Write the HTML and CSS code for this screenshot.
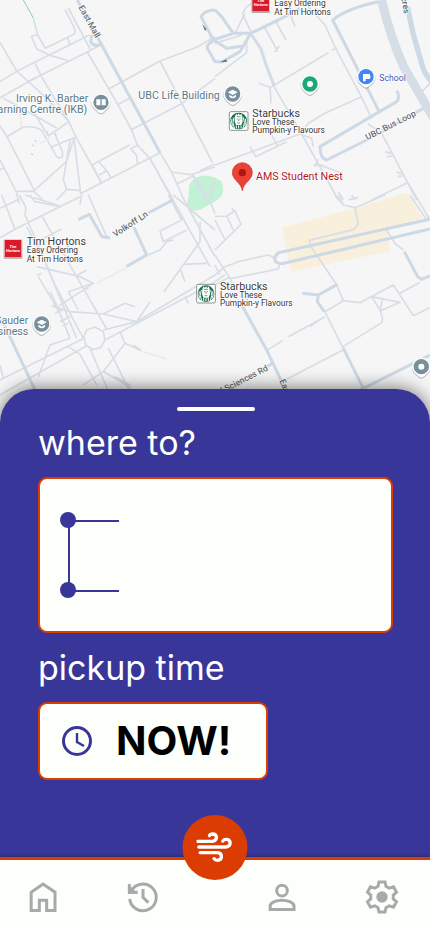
FILE: index.html
```html
<!DOCTYPE html>
<html lang="en">
<head>
<meta charset="utf-8">
<meta name="viewport" content="width=device-width, initial-scale=1">
<title>Where to?</title>
<link rel="stylesheet" href="styles.css">
</head>
<body>
<div class="screen">
  <section class="map" aria-label="Campus map">
    <svg class="map-art" viewBox="0 0 1290 1260" preserveAspectRatio="xMidYMin slice">
      <defs>
        <path id="pin" d="M-28 0A28 28 0 1 1 28 0C28 14 18 20 10 28Q0 38 -10 28C-18 20 -28 14 -28 0Z"/>
        <g id="siren">
          <rect x="-28" y="-28" width="56" height="56" rx="4" fill="#fff" stroke="#8d9299" stroke-width="3"/>
          <circle r="25" fill="#17704c"/>
          <path d="M-11 -14L-7 -22L-3 -17L0 -23L4 -17L8 -22L11 -14L12 2L8 12H-8L-12 2Z" fill="#fff"/>
          <path d="M-14 -11Q-21 5 -13 21M14 -11Q21 5 13 21M-20 -7Q-24 5 -18 14M20 -7Q24 5 18 14M-7 13V22M0 13V23M7 13V22" fill="none" stroke="#fff" stroke-width="3"/>
          <path d="M-6 -6H-2M2 -6H6M0 -5V1M-4 5Q0 8 4 5M-6 -13H6" fill="none" stroke="#17704c" stroke-width="2"/>
        </g>
        <g id="timmy">
          <rect x="-28" y="-28" width="56" height="58" rx="3" fill="#a9abb0"/>
          <rect x="-27" y="-28" width="54" height="54" rx="3" fill="#f4d9db"/>
          <rect x="-25" y="-26" width="50" height="51" fill="#da1a2b"/>
          <text class="tim" y="-3">Tim</text><text class="tim" y="10">Hortons</text>
        </g>
        <g id="cap">
          <path d="M-15 -5L0 -13L15 -5L0 3Z" fill="#fff"/>
          <path d="M-10 2V8Q0 17 10 8V2L0 8Z" fill="#fff"/>
        </g>
      </defs>

      <path class="park" d="M566 560Q574 534 606 527Q640 525 665 545Q675 570 664 588Q650 605 620 618Q600 635 575 629Q558 620 562 605Q568 590 566 560Z"/>
      <path class="sand" d="M846 683L1075 622L1195 585L1222 578L1268 655L1165 687L1170 753L874 816Z"/>

      <g class="lane">
        <path d="M100 55L113 105L136 145L222 103Q228 96 222 82L195 28M94 108L110 147L150 166L208 183M94 108L113 105M202 112L210 133M205 24L270 147"/>
        <path d="M0 127L50 213L124 280L205 362M0 245L50 214L270 104M0 293L110 232L262 156L300 136M105 190L130 240L205 362L228 411L305 550"/>
        <path d="M262 156L352 311L395 390L412 435L450 475L520 600M327 266L480 183L590 142L645 110M480 183L637 487M352 314L390 294M392 390L545 311L645 235M82 246L110 232"/>
        <path d="M10 295L84 335L170 384M100 335L145 408L205 366M21 410L68 382Q105 376 125 392L156 445L170 470Q180 478 188 468L187 455L165 402M145 408L140 392M156 440L228 411"/>
        <path class="faint" d="M65 382L60 340M120 430L150 415"/>
        <path d="M0 378L21 410L103 571L199 485L222 415L242 581M210 420L190 540L200 568L242 572M48 574H102L128 600M170 600L200 568M0 480L48 574L58 610M0 510L10 505"/>
        <path d="M240 582L480 458M276 495L305 550M276 495L390 434M297 485L320 512L297 525M320 512L333 534M415 435L392 446L410 467L412 490M450 475L560 675M480 458L515 516L552 600L645 770M515 516L572 524L645 500M530 552L580 528L620 600M645 492L600 512"/>
        <path d="M575 524Q612 558 645 640M645 545Q625 570 636 600"/>
      </g>
      <g class="lane" transform="translate(645 0)">
        <path d="M90 40L60 100M82 40L95 20L125 0M0 130L80 105M0 230L95 158V115M110 100L82 40M180 60L213 120M225 40L240 80M145 75L187 152L178 155M187 145L193 138M132 250L165 262L177 256L340 158M165 262L168 310M350 150L365 145"/>
        <path d="M280 20L330 75L362 145L440 292L470 355M440 290L330 340L280 370L255 402L0 495M105 440L122 470L215 425M170 405L187 437M175 256L260 402L370 600M255 402L290 415L295 440M458 370L500 400L605 600M510 455L530 460M515 470L532 468M545 515L560 522M548 530L562 528M300 490L370 515L385 535M310 478L300 500M325 495L295 497M370 575L385 600M470 600L575 550M615 280L645 250M400 600L430 592"/>
      </g>
      <g class="lane" transform="translate(0 585)">
        <path d="M0 40L58 12M5 0L45 103L0 128M45 103L125 62L240 5M58 0L78 38L75 60L110 140L135 200L165 270L250 430M90 0L105 20L182 35M75 0L180 33M125 62L320 402M80 95L140 210M110 140L185 102M110 215L240 245L280 265L205 290M260 225L225 245M265 0L320 125M245 0L240 30M112 240L125 235M115 245L180 355L210 430M135 200L230 430M150 290L180 350M155 332L210 350L310 357L410 380M205 290L235 345M280 265L178 332M310 357L375 325L405 335M240 290L265 280M165 355L187 345M180 380L210 365M187 392L205 385"/>
        <path d="M0 555L255 428M0 600L260 452M310 405L410 380L645 240M315 435L645 262M450 320L410 380M492 290L600 140V80M540 220L555 260M550 208L620 205M510 0L630 215M520 0L645 105M505 0L545 75L480 108L490 140L560 105M445 180L480 165L500 140L520 135M555 305L565 325M260 405L285 396L310 410L315 435L302 458L280 464L257 450L252 425Z"/>
        <path d="M210 430L150 450L115 545M200 452L240 478L290 570M270 460L330 600M250 570L310 530L375 445L360 410M312 530L395 580M325 460L400 610M375 445L425 468M345 545L390 570M0 510L10 550M400 450L425 467"/>
        <path class="faint" d="M290 265L380 218M430 470L500 492"/>
      </g>
      <g class="lane" transform="translate(645 585)">
        <path d="M0 65L35 63L60 48L78 88L0 165M0 75L30 135M35 63L55 105M50 40L60 50M0 180L45 250L62 290M0 210L15 240M0 240L30 215L70 200L160 180L178 188M30 240L0 260M45 250L60 248L190 222L195 205M0 270L45 245M360 0L385 30L420 38L510 0M370 0L385 30M410 0L420 15M420 38L430 88L415 104L283 136L285 150L365 270L385 317L435 323L535 270L595 362L645 338M515 105L540 145L565 165M385 317L330 350M285 395L330 365M330 350L384 460M220 425L330 365M158 465L203 436M384 455L500 383L503 370L495 345L470 305L555 322L495 348L503 310M555 295L615 262M210 555L384 465M585 0L635 75M580 -35L645 75"/>
      </g>

      <g class="road">
        <path d="M232 0L300 125L480 458M300 133Q280 142 272 125L275 108L290 105"/>
        <path d="M235 659L268 643L306 710L330 714M445 639L518 600M402 682L440 765L380 799M0 950L25 1000L105 1170"/>
        <path d="M645 30Q615 30 603 50L640 120L680 145L730 138L752 100M752 100H700L665 50L645 30M640 120L700 100M645 120Q620 130 622 145L645 185H668L720 155L752 100L845 55L900 25"/>
        <path d="M1135 5Q1040 25 998 60L1140 340M1190 272Q1202 290 1190 305L960 440Q960 475 980 480L1100 420L1270 325"/>
        <path d="M1290 658L835 758Q818 775 828 786Q840 793 855 789L1290 687M1213 755L1253 830L1265 838L1290 828"/>
        <path d="M907 880L955 885L1012 853M955 885L952 905L973 935M725 915L800 1050L862 1180M1030 1045L1090 1165M1080 1170L1160 1130L1290 1065M800 1100L822 1088"/>
      </g>
      <path class="road avenue" d="M752 100L782 145L800 200L822 256"/>
      <path class="highway" d="M1145 0Q1170 110 1211 200L1310 370"/>
      <path class="road wide" d="M1222 20L1239 100L1268 200Q1275 225 1300 250"/>
      <path d="M70 0L100 54M94 460L98 465M105 420L108 425M97 435L101 438M165 400L168 404" stroke="#86cfb4" stroke-width="3"/>
      <path d="M606 72L620 88L615 92ZM660 187L678 178L682 185Z" fill="#70757a"/>

      <g class="name place">
        <text x="48" y="306">Irving K. Barber</text>
        <text x="262" y="339" text-anchor="end">Learning Centre (IKB)</text>
        <text x="415" y="297">UBC Life Building</text>
        <text x="85" y="973" text-anchor="end">Sauder</text>
        <text x="85" y="1004" text-anchor="end">Business</text>
      </g>
      <g class="name shop">
        <text x="757" y="350">Starbucks</text>
        <text x="80" y="735">Tim Hortons</text>
        <text x="660" y="869">Starbucks</text>
      </g>
      <g class="name promo">
        <text x="823" y="18">Easy Ordering</text><text x="823" y="45">At Tim Hortons</text>
        <text x="757" y="376">Love These</text><text x="757" y="399">Pumpkin-y Flavours</text>
        <text x="80" y="760">Easy Ordering</text><text x="80" y="786">At Tim Hortons</text>
        <text x="660" y="895">Love These</text><text x="660" y="918">Pumpkin-y Flavours</text>
      </g>
      <text class="name nest" x="768" y="541">AMS Student Nest</text>
      <text class="name school" x="1138" y="243">School</text>
      <g class="name street">
        <text transform="translate(235 22) rotate(61)">East Mall</text>
        <text transform="translate(346 712) rotate(-33)">Volkoff Ln</text>
        <text transform="translate(1102 421) rotate(-27)">UBC Bus Loop</text>
        <text transform="translate(806 1110) rotate(-27)" text-anchor="end">Agricultural Sciences Rd</text>
        <text transform="translate(838 1142) rotate(66)">East Mall</text>
        <text class="west" transform="translate(1212 42) rotate(80)" text-anchor="end">Wesbrook Acres</text>
      </g>

      <g class="pins">
        <g transform="translate(303 307)"><use class="pin-base" href="#pin"/><circle r="23" fill="#78909c"/><path d="M-14 -9H-2V9H-14ZM2 -9H14V9H2Z" fill="#fff"/></g>
        <g transform="translate(698 282)"><use class="pin-base" href="#pin"/><circle r="23" fill="#78909c"/><use href="#cap"/></g>
        <g transform="translate(125 972)"><use class="pin-base" href="#pin"/><circle r="23" fill="#78909c"/><use href="#cap"/></g>
        <g transform="translate(1264 1100)"><use class="pin-base" href="#pin"/><circle r="23" fill="#78909c"/><circle r="9" fill="#fff"/></g>
        <g transform="translate(930 252)"><use class="pin-base" href="#pin"/><circle r="23" fill="#1da877"/><circle r="9" fill="#fff"/></g>
        <g transform="translate(1098 230)"><use class="pin-base" href="#pin"/><circle r="23" fill="#4285f4"/><path d="M-9 -8H11Q16 0 11 7H-1V14H-9Z" fill="#fff"/></g>
      </g>
      <path d="M727 572C724 548 697 540 697 518A30 30 0 1 1 757 518C757 540 730 548 727 572Z" fill="#ea4335" stroke="#c5372c" stroke-width="2"/>
      <circle cx="727" cy="518" r="11" fill="#b31412"/>
      <use href="#siren" x="716" y="363"/>
      <use href="#siren" x="618" y="881"/>
      <use href="#timmy" x="39" y="746"/>
      <use href="#timmy" x="782" y="9"/>
    </svg>
  </section>

  <main class="sheet">
    <span class="handle"></span>
    <h2 class="title">where to?</h2>
    <div class="card route">
      <svg class="route-line" viewBox="0 0 60 86" aria-hidden="true">
        <path d="M8 9H59M9 8V79H59" fill="none" stroke="#39369a" stroke-width="2"/>
        <circle cx="8" cy="8" r="8" fill="#39369a"/><circle cx="8" cy="78" r="8" fill="#39369a"/>
      </svg>
      <div class="stops">
        <input class="stop" type="text" aria-label="Pickup location">
        <input class="stop" type="text" aria-label="Destination">
      </div>
    </div>
    <h2 class="title">pickup time</h2>
    <button class="card time" type="button">
      <svg class="clock" viewBox="0 0 30 30" aria-hidden="true">
        <g fill="none" stroke="#39369a"><circle cx="15" cy="15" r="13.5" stroke-width="3"/><path d="M15 7V16L22 20" stroke-width="2.4"/></g>
      </svg>
      <span>NOW!</span>
    </button>
  </main>

  <nav class="tabs" aria-label="Main">
    <div class="tab-pair">
      <a class="tab" href="#home" aria-label="Home"><svg viewBox="79 240 102 102"><path d="M94.500 331.500V276.500L130 252L166 276.500V331.500H141V301H119V331.500Z"/></svg></a>
      <a class="tab" href="#history" aria-label="History"><svg viewBox="376 240 102 102"><path d="M387 297A40 40 0 1 0 391 274M386 252V277H411M427 267V292L443 308"/><path class="solid" d="M382 252L411 281H382Z"/></svg></a>
    </div>
    <div class="tab-pair">
      <a class="tab" href="#profile" aria-label="Profile"><svg viewBox="148 240 102 102"><circle cx="199" cy="272" r="16"/><path d="M163.500 328.500V318C163.500 307 185 300.500 199 300.500S235 307 235 318V328.500Z"/></svg></a>
      <a class="tab" href="#settings" aria-label="Settings"><svg viewBox="-51 -51 102 102"><path d="M-12 -32L-9 -45H9L12 -32L21.700 -26.400L34.500 -30.300L43.500 -14.700L33.700 -5.600V5.600L43.500 14.700L34.500 30.300L21.700 26.400L12 32L9 45H-9L-12 32L-21.700 26.400L-34.500 30.300L-43.500 14.700L-33.700 5.600V-5.600L-43.500 -14.700L-34.500 -30.300L-21.700 -26.400Z"/><circle class="solid" r="17"/></svg></a>
    </div>
    <button class="ride" type="button" aria-label="Request ride">
      <svg viewBox="56 70 108 96"><path d="M59 101H104Q116 99 116 89Q115 79 104 79Q97 79 95 84M63 118H144Q157 116 157 105Q156 95 145 95Q138 95 135 100M67 135H119Q131 136 131 147Q130 158 119 158Q112 158 109 153"/></svg>
    </button>
  </nav>
</div>
</body>
</html>
```
FILE: styles.css
```css
* { box-sizing: border-box; }

body {
  margin: 0;
  font-family: Inter, "Liberation Sans", sans-serif;
  background: #fdfffa;
}

.screen {
  display: flex;
  flex-direction: column;
  min-height: 100vh;
  overflow: hidden;
}

/* Map */
.map {
  height: 420px;
  background: #f6f6f6;
}

.map-art {
  display: block;
  width: 100%;
  height: 100%;
  font-family: Roboto, sans-serif;
}

.park { fill: #c3f1d5; }
.sand { fill: #f8f0dc; }

.lane, .road, .highway {
  fill: none;
  stroke-linejoin: round;
}

.lane { stroke: #d8dde6; stroke-width: 5px; }
.faint { stroke: #eaebed; }
.road { stroke: #cdd9e4; stroke-width: 9px; }
.avenue { stroke: #d3dce6; }
.wide { stroke-width: 16px; }
.highway { stroke: #d5dde7; stroke-width: 27px; }

.name {
  paint-order: stroke;
  stroke: #fff;
  stroke-width: 5px;
  stroke-linejoin: round;
}

.place { font-size: 32px; fill: #5b7886; }
.shop { font-size: 32px; fill: #3c3c3c; }
.promo { font-size: 25px; fill: #333; }
.nest { font-size: 32px; fill: #b3191c; }
.school { font-size: 26px; fill: #3c5bb5; }
.street { font-size: 26px; font-weight: 500; fill: #666b70; }
.west { fill: #52687a; }

.tim {
  font-size: 12px;
  font-style: italic;
  font-weight: 700;
  fill: #fff;
  text-anchor: middle;
}

.pin-base {
  fill: #fff;
  filter: drop-shadow(0 2px 2px #0006);
}

/* Booking sheet */
.sheet {
  position: relative;
  flex: 1;
  display: flex;
  flex-direction: column;
  margin-top: -31px;
  padding: 18px 37px 77px 38px;
  border-radius: 34px 34px 0 0;
  background: #39369a;
  box-shadow: 0 -1px 18px #0008;
}

.handle {
  align-self: center;
  width: 78px;
  height: 4px;
  border-radius: 2px;
  background: #fff;
}

.title {
  margin: 12px 0 14px;
  font-size: 34px;
  font-weight: 400;
  line-height: 40px;
  color: #fff;
}

.card + .title { margin-top: 15px; }

.card {
  display: flex;
  align-items: center;
  border: 2px solid #da3c02;
  border-radius: 9px;
  background: #fdfffa;
}

.route {
  gap: 12px;
  min-height: 156px;
  padding: 0 20px;
}

.route-line {
  flex: none;
  width: 60px;
  height: 86px;
}

.stops {
  flex: 1;
  display: grid;
  gap: 30px;
}

.stop {
  width: 100%;
  height: 40px;
  padding: 0;
  border: 0;
  background: transparent;
  font: 20px Inter, sans-serif;
}

.time {
  align-self: flex-start;
  gap: 24px;
  min-height: 78px;
  padding: 0 35px 0 22px;
  font: 700 40px/48px Inter, sans-serif;
  color: #000;
}

.clock {
  width: 30px;
  height: 30px;
}

/* Tab bar */
.tabs {
  position: relative;
  display: flex;
  justify-content: space-between;
  height: 75px;
  padding: 2px 31px 0 26px;
  border-top: 3px solid #da3c02;
  background: #fdfffa;
  box-shadow: 0 -1px 4px #0004;
}

.tab-pair {
  display: flex;
  align-items: center;
  gap: 66px;
}

.tab, .tab svg {
  display: block;
  width: 34px;
  height: 34px;
}

.tab svg {
  fill: none;
  stroke: #a8a9ab;
  stroke-width: 9px;
}

.tab .solid {
  fill: #a8a9ab;
  stroke: none;
}

.ride {
  position: absolute;
  top: -45px;
  left: 50%;
  display: grid;
  place-items: center;
  width: 65px;
  height: 65px;
  padding: 0 2px 2px 0;
  border: 0;
  border-radius: 50%;
  background: #da3c02;
  transform: translateX(-50%);
}

.ride svg {
  width: 36px;
  height: 32px;
  fill: none;
  stroke: #fff;
  stroke-width: 10px;
  stroke-linecap: round;
}
```
